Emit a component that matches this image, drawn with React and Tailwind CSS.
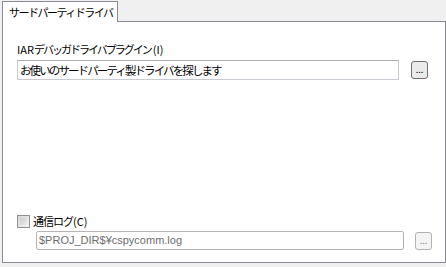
export default function App() {
  const font = { fontFamily: '"Noto Sans CJK JP", "Liberation Sans", sans-serif' };
  return (
    <div className="w-[446px] h-[267px] bg-[#f0f0f0] pt-[1px] text-[11px] text-black overflow-hidden whitespace-nowrap" style={font}>
      {/* tab */}
      <div className="relative z-10 -mb-px ml-[2px] w-[116px] h-[21px] border border-b-0 border-[#898c95] bg-white pl-[6px] leading-[20px] tracking-[-1.5px]">
        サードパーティドライバ
      </div>

      {/* panel */}
      <div className="ml-[2px] w-[444px] h-[242px] border border-[#898c95] bg-white flex flex-col pl-[14px]">
        <div className="mt-[19px] leading-[16px]">
          IAR<span className="tracking-[-2px]">デバッガドライバプラグイン</span>
          <span className="ml-[2px]">(I)</span>
        </div>
        <div className="mt-[3px] flex items-center">
          <div className="w-[382px] h-[20px] border border-[#c8ccd2] border-t-[#abadb3] bg-white pl-[2px] leading-[18px] text-[11.5px] tracking-[-1.9px]">
            お使いのサードパーティ製ドライバを探します
          </div>
          <button className="ml-[12px] w-[17px] h-[18px] rounded-[3px] border border-[#707070] bg-[#eaeaea] text-[9px] leading-[12px] flex items-end justify-center pb-[2px]">
            ...
          </button>
        </div>

        <div className="flex-1" />

        <div className="flex items-center">
          <div className="w-[13px] h-[13px] border border-[#8e8f8f] bg-gradient-to-br from-[#d8d8d8] to-[#f4f4f4] p-[2px]">
            <div className="w-full h-full bg-gradient-to-br from-[#cbcbcb] to-[#ececec]" />
          </div>
          <div className="ml-[3px] leading-[16px]">
            <span className="tracking-[-1px]">通信ログ</span>(C)
          </div>
        </div>
        <div className="mt-[2px] mb-[12px] ml-[19px] flex items-center">
          <div
            className="w-[368px] h-[19px] rounded-[2px] border border-[#b4b4b4] bg-white pl-[2px] leading-[17px] text-[11px] text-[#6d6d6d]"
            style={{ fontFamily: '"Liberation Sans", sans-serif' }}
          >
            $PROJ_DIR$¥cspycomm.log
          </div>
          <button className="ml-[11px] w-[17px] h-[18px] rounded-[3px] border border-[#adb2b5] bg-[#f4f4f4] text-[9px] text-[#838383] leading-[12px] flex items-end justify-center pb-[2px]">
            ...
          </button>
        </div>
      </div>
    </div>
  );
}
